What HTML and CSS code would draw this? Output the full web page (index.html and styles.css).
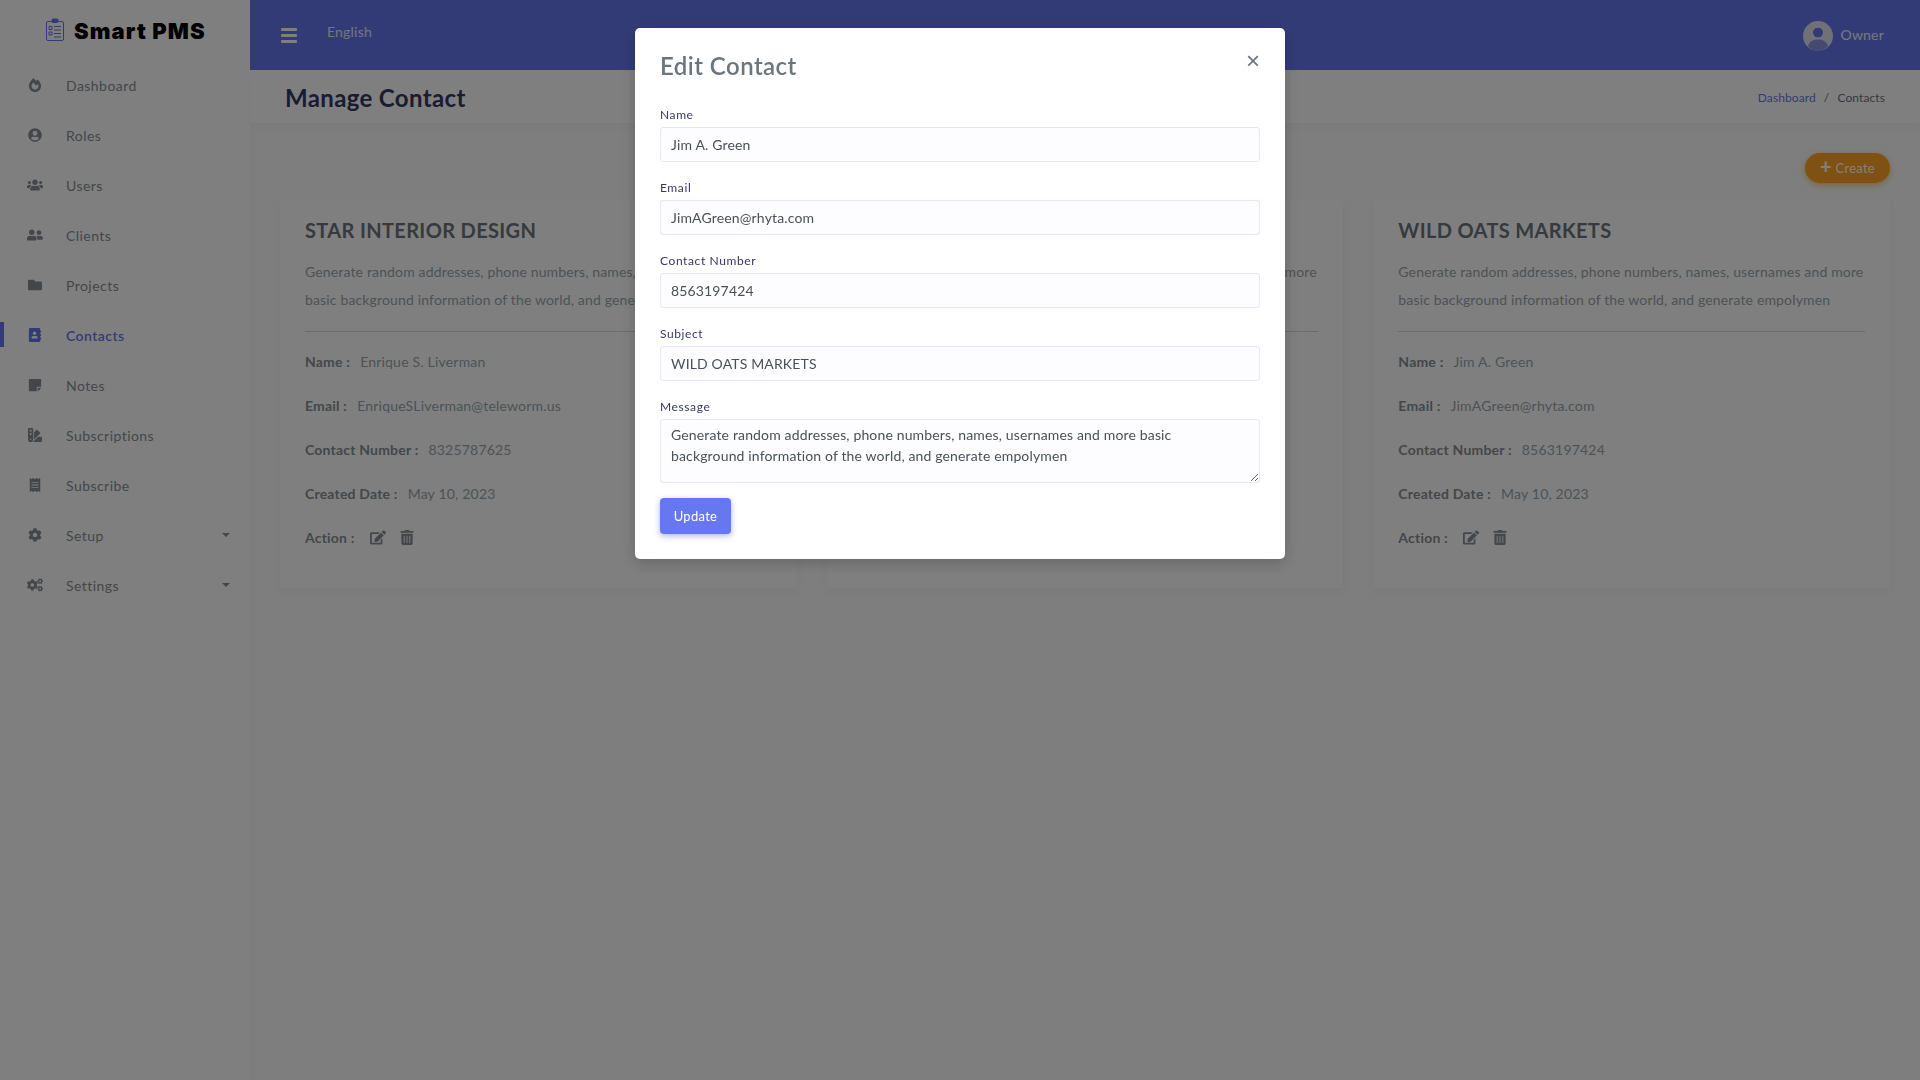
FILE: index.html
```html
<!DOCTYPE html>
<html lang="en">
  <head>
    <meta charset="UTF-8" />
    <meta name="viewport" content="width=device-width, initial-scale=1.0" />
    <title>Smart PMS - Contacts</title>
    <link rel="stylesheet" href="styles.css">
  </head>
  <body>
    <!-- icon set -->
    <svg class="icon-defs" aria-hidden="true">
      <symbol id="i-fire" viewBox="0 0 448 512"><path d="M323.56 51.2c-20.8 19.3-39.58 39.59-56.22 59.97C240.08 73.62 206.28 35.53 168 0 69.74 91.17 0 209.96 0 281.6 0 408.85 100.29 512 224 512s224-103.15 224-230.4c0-53.27-51.98-163.14-124.44-230.4zm-19.47 340.65C282.43 407.01 255.72 416 226.86 416 154.71 416 96 368.26 96 290.75c0-38.61 24.31-72.63 72.79-130.75 6.93 7.98 98.83 125.34 98.83 125.34l58.63-66.88c4.14 6.85 7.91 13.55 11.27 19.97 27.35 52.19 15.81 118.97-33.43 153.42z"/></symbol>
      <symbol id="i-user-circle" viewBox="0 0 496 512"><path d="M248 8C111 8 0 119 0 256s111 248 248 248 248-111 248-248S385 8 248 8zm0 96c48.6 0 88 39.4 88 88s-39.4 88-88 88-88-39.4-88-88 39.4-88 88-88zm0 344c-58.7 0-111.3-26.6-146.5-68.2 18.8-35.4 55.6-59.8 98.5-59.8 2.4 0 4.8.4 7.1 1.1 13 4.2 26.6 6.9 40.9 6.9 14.3 0 28-2.7 40.9-6.9 2.3-.7 4.7-1.1 7.1-1.1 42.9 0 79.7 24.4 98.5 59.8C359.3 421.4 306.7 448 248 448z"/></symbol>
      <symbol id="i-users" viewBox="0 0 640 512"><path d="M96 224c35.3 0 64-28.7 64-64s-28.7-64-64-64-64 28.7-64 64 28.7 64 64 64zm448 0c35.3 0 64-28.7 64-64s-28.7-64-64-64-64 28.7-64 64 28.7 64 64 64zm32 32h-64c-17.6 0-33.5 7.1-45.1 18.6 40.3 22.1 68.9 62 75.1 109.4h66c17.7 0 32-14.3 32-32v-32c0-35.3-28.7-64-64-64zm-256 0c61.9 0 112-50.1 112-112S381.9 32 320 32 208 82.1 208 144s50.1 112 112 112zm76.8 32h-8.3c-20.8 10-43.9 16-68.5 16s-47.6-6-68.5-16h-8.3C179.6 288 128 339.6 128 403.2V432c0 26.5 21.5 48 48 48h288c26.5 0 48-21.5 48-48v-28.8c0-63.6-51.6-115.2-115.2-115.2zm-223.7-13.4C161.5 263.1 145.6 256 128 256H64c-35.3 0-64 28.7-64 64v32c0 17.7 14.3 32 32 32h65.9c6.3-47.4 34.9-87.3 75.2-109.4z"/></symbol>
      <symbol id="i-friends" viewBox="0 0 640 512"><path d="M192 256c61.9 0 112-50.1 112-112S253.9 32 192 32 80 82.1 80 144s50.1 112 112 112zm76.8 32h-8.3c-20.8 10-43.9 16-68.5 16s-47.6-6-68.5-16h-8.3C51.6 288 0 339.6 0 403.2V432c0 26.5 21.5 48 48 48h288c26.5 0 48-21.5 48-48v-28.8c0-63.6-51.6-115.2-115.2-115.2zM480 256c53 0 96-43 96-96s-43-96-96-96-96 43-96 96 43 96 96 96zm48 32h-3.8c-13.9 4.8-28.6 8-44.2 8s-30.3-3.2-44.2-8H432c-20.4 0-39.2 5.9-55.7 15.4 24.4 26.3 39.7 61.2 39.7 99.8v38.4c0 2.2-.5 4.3-.6 6.4H592c26.5 0 48-21.5 48-48 0-61.9-50.1-112-112-112z"/></symbol>
      <symbol id="i-folder" viewBox="0 0 512 512"><path d="M464 128H272l-64-64H48C21.49 64 0 85.49 0 112v288c0 26.51 21.49 48 48 48h416c26.51 0 48-21.49 48-48V176c0-26.51-21.49-48-48-48z"/></symbol>
      <symbol id="i-address" viewBox="0 0 448 512"><path d="M436 160c6.6 0 12-5.4 12-12v-40c0-6.6-5.4-12-12-12h-20V48c0-26.5-21.5-48-48-48H48C21.5 0 0 21.5 0 48v416c0 26.5 21.5 48 48 48h320c26.5 0 48-21.5 48-48v-48h20c6.6 0 12-5.4 12-12v-40c0-6.6-5.4-12-12-12h-20v-64h20c6.6 0 12-5.4 12-12v-40c0-6.6-5.4-12-12-12h-20v-64h20zm-228-32c35.3 0 64 28.7 64 64s-28.7 64-64 64-64-28.7-64-64 28.7-64 64-64zm112 236.8c0 10.6-10 19.2-22.4 19.2H118.4C106 384 96 375.4 96 364.8v-19.2c0-31.8 30.1-57.6 67.2-57.6h5c12.3 5.1 25.7 8 39.8 8s27.6-2.9 39.8-8h5c37.1 0 67.2 25.8 67.2 57.6v19.2z"/></symbol>
      <symbol id="i-note" viewBox="0 0 448 512"><path d="M312 320h136V56c0-13.3-10.7-24-24-24H24C10.7 32 0 42.7 0 56v400c0 13.3 10.7 24 24 24h264V344c0-13.2 10.8-24 24-24zm129 55l-98 98c-4.5 4.5-10.8 7-17 7h-6v-128h128v6.1c0 6.3-2.5 12.4-7 16.9z"/></symbol>
      <symbol id="i-swatch" viewBox="0 0 512 512"><path d="M434.66,167.71h0L344.5,77.36a31.83,31.83,0,0,0-45-.07h0l-.07.07L224,152.88V424L434.66,212.9A32,32,0,0,0,434.66,167.71ZM480,320H373.19L186.29,507.42c-1.2,1.2-2.5,2.2-3.8,3.38H480a32,32,0,0,0,32-32V352A32,32,0,0,0,480,320ZM192,32A32,32,0,0,0,160,0H32A32,32,0,0,0,0,32V416a96,96,0,0,0,192,0ZM96,440a24,24,0,1,1,24-24A24,24,0,0,1,96,440Zm32-184H64V192h64Zm0-128H64V64h64Z"/></symbol>
      <symbol id="i-receipt" viewBox="0 0 384 512"><path d="M358.4 3.2L320 48 265.6 3.2a15.9 15.9 0 0 0-19.2 0L192 48 137.6 3.2a15.9 15.9 0 0 0-19.2 0L64 48 25.6 3.2C15-4.7 0 2.8 0 16v480c0 13.2 15 20.7 25.6 12.8L64 464l54.4 44.8a15.9 15.9 0 0 0 19.2 0L192 464l54.4 44.8a15.9 15.9 0 0 0 19.2 0L320 464l38.4 44.8c10.5 7.9 25.6.4 25.6-12.8V16c0-13.2-15-20.7-25.6-12.8zM320 360c0 4.4-3.6 8-8 8H72c-4.4 0-8-3.6-8-8v-16c0-4.4 3.6-8 8-8h240c4.4 0 8 3.6 8 8v16zm0-96c0 4.4-3.6 8-8 8H72c-4.4 0-8-3.6-8-8v-16c0-4.4 3.6-8 8-8h240c4.4 0 8 3.6 8 8v16zm0-96c0 4.4-3.6 8-8 8H72c-4.4 0-8-3.6-8-8v-16c0-4.4 3.6-8 8-8h240c4.4 0 8 3.6 8 8v16z"/></symbol>
      <symbol id="i-cog" viewBox="0 0 512 512"><path d="M487.4 315.7l-42.6-24.6c4.3-23.2 4.3-47 0-70.2l42.6-24.6c4.9-2.8 7.1-8.6 5.5-14-11.1-35.6-30-67.8-54.7-94.6-3.8-4.1-10-5.1-14.8-2.3L380.8 110c-17.9-15.4-38.5-27.3-60.8-35.1V25.8c0-5.6-3.9-10.5-9.4-11.7-36.7-8.2-74.3-7.8-109.2 0-5.5 1.2-9.4 6.1-9.4 11.7V75c-22.2 7.9-42.8 19.8-60.8 35.1L88.7 85.5c-4.9-2.8-11-1.9-14.8 2.3-24.7 26.7-43.6 58.9-54.7 94.6-1.7 5.4.6 11.2 5.5 14L67.3 221c-4.3 23.2-4.3 47 0 70.2l-42.6 24.6c-4.9 2.8-7.1 8.6-5.5 14 11.1 35.6 30 67.8 54.7 94.6 3.8 4.1 10 5.1 14.8 2.3l42.6-24.6c17.9 15.4 38.5 27.3 60.8 35.1v49.2c0 5.6 3.9 10.5 9.4 11.7 36.7 8.2 74.3 7.8 109.2 0 5.5-1.2 9.4-6.1 9.4-11.7v-49.2c22.2-7.9 42.8-19.8 60.8-35.1l42.6 24.6c4.9 2.8 11 1.9 14.8-2.3 24.7-26.7 43.6-58.9 54.7-94.6 1.5-5.5-.7-11.3-5.6-14.1zM256 336c-44.1 0-80-35.9-80-80s35.9-80 80-80 80 35.9 80 80-35.9 80-80 80z"/></symbol>
      <symbol id="i-cogs" viewBox="0 0 640 512"><path d="M512.1 191l-8.2 14.3c-3 5.3-9.4 7.5-15.1 5.4-11.8-4.4-22.6-10.7-32.1-18.6-4.6-3.8-5.8-10.5-2.8-15.7l8.2-14.3c-6.9-8-12.3-17.3-15.9-27.4h-16.5c-6 0-11.2-4.3-12.2-10.3-2-12-2.1-24.6 0-37.1 1-6 6.2-10.4 12.2-10.4h16.5c3.6-10.1 9-19.4 15.9-27.4l-8.2-14.3c-3-5.2-1.9-11.9 2.8-15.7 9.5-7.9 20.4-14.2 32.1-18.6 5.7-2.1 12.1.1 15.1 5.4l8.2 14.3c10.5-1.9 21.2-1.9 31.7 0L552 6.3c3-5.3 9.4-7.5 15.1-5.4 11.8 4.4 22.6 10.7 32.1 18.6 4.6 3.8 5.8 10.5 2.8 15.7l-8.2 14.3c6.9 8 12.3 17.3 15.9 27.4h16.5c6 0 11.2 4.3 12.2 10.3 2 12 2.1 24.6 0 37.1-1 6-6.2 10.4-12.2 10.4h-16.5c-3.6 10.1-9 19.4-15.9 27.4l8.2 14.3c3 5.2 1.9 11.9-2.8 15.7-9.5 7.9-20.4 14.2-32.1 18.6-5.7 2.1-12.1-.1-15.1-5.4l-8.2-14.3c-10.4 1.9-21.2 1.9-31.7 0zm-10.5-58.8c38.5 29.6 82.4-14.3 52.8-52.8-38.5-29.7-82.4 14.3-52.8 52.8zM386.3 286.1l33.7 16.8c10.1 5.8 14.5 18.1 10.5 29.1-8.9 24.2-26.4 46.4-42.6 65.8-7.4 8.9-20.2 11.1-30.3 5.3l-29.1-16.8c-16 13.7-34.6 24.6-54.9 31.7v33.6c0 11.6-8.3 21.6-19.7 23.6-24.6 4.2-50.4 4.4-75.9 0-11.5-2-20-11.9-20-23.6V418c-20.3-7.2-38.9-18-54.9-31.7L74 403c-10 5.8-22.9 3.6-30.3-5.3-16.2-19.4-33.3-41.6-42.2-65.7-4-10.9.4-23.2 10.5-29.1l33.3-16.8c-3.9-20.9-3.9-42.4 0-63.4L12 205.8c-10.1-5.8-14.6-18.1-10.5-29 8.9-24.2 26-46.4 42.2-65.8 7.4-8.9 20.2-11.1 30.3-5.3l29.1 16.8c16-13.7 34.6-24.6 54.9-31.7V57.1c0-11.5 8.2-21.5 19.6-23.5 24.6-4.2 50.5-4.4 76-.1 11.5 2 20 11.9 20 23.6v33.6c20.3 7.2 38.9 18 54.9 31.7l29.1-16.8c10-5.8 22.9-3.6 30.3 5.3 16.2 19.4 33.2 41.6 42.1 65.8 4 10.9.1 23.2-10 29.1l-33.7 16.8c3.9 21 3.9 42.5 0 63.5zm-117.6 21.1c59.2-77-28.7-164.9-105.7-105.7-59.2 77 28.7 164.9 105.7 105.7zm243.4 182.7l-8.2 14.3c-3 5.3-9.4 7.5-15.1 5.4-11.8-4.4-22.6-10.7-32.1-18.6-4.6-3.8-5.8-10.5-2.8-15.7l8.2-14.3c-6.9-8-12.3-17.3-15.9-27.4h-16.5c-6 0-11.2-4.3-12.2-10.3-2-12-2.1-24.6 0-37.1 1-6 6.2-10.4 12.2-10.4h16.5c3.6-10.1 9-19.4 15.9-27.4l-8.2-14.3c-3-5.2-1.9-11.9 2.8-15.7 9.5-7.9 20.4-14.2 32.1-18.6 5.7-2.1 12.1.1 15.1 5.4l8.2 14.3c10.5-1.9 21.2-1.9 31.7 0l8.2-14.3c3-5.3 9.4-7.5 15.1-5.4 11.8 4.4 22.6 10.7 32.1 18.6 4.6 3.8 5.8 10.5 2.8 15.7l-8.2 14.3c6.9 8 12.3 17.3 15.9 27.4h16.5c6 0 11.2 4.3 12.2 10.3 2 12 2.1 24.6 0 37.1-1 6-6.2 10.4-12.2 10.4h-16.5c-3.6 10.1-9 19.4-15.9 27.4l8.2 14.3c3 5.2 1.9 11.9-2.8 15.7-9.5 7.9-20.4 14.2-32.1 18.6-5.7 2.1-12.1-.1-15.1-5.4l-8.2-14.3c-10.4 1.9-21.2 1.9-31.7 0zM501.6 431c38.5 29.6 82.4-14.3 52.8-52.8-38.5-29.6-82.4 14.3-52.8 52.8z"/></symbol>
      <symbol id="i-edit" viewBox="0 0 576 512"><path d="M402.6 83.2l90.2 90.2c3.8 3.8 3.8 10 0 13.8L274.4 405.6l-92.8 10.3c-12.4 1.4-22.9-9.1-21.5-21.5l10.3-92.8L388.8 83.2c3.8-3.8 10-3.8 13.8 0zm162-22.9l-48.8-48.8c-15.2-15.2-39.9-15.2-55.2 0l-35.4 35.4c-3.8 3.8-3.8 10 0 13.8l90.2 90.2c3.8 3.8 10 3.8 13.8 0l35.4-35.4c15.2-15.3 15.2-40 0-55.2zM384 346.2V448H64V128h229.8c3.2 0 6.2-1.3 8.5-3.5l40-40c7.6-7.6 2.2-20.5-8.5-20.5H48C21.5 64 0 85.5 0 112v352c0 26.5 21.5 48 48 48h352c26.5 0 48-21.5 48-48V306.2c0-10.7-12.9-16-20.5-8.5l-40 40c-2.2 2.3-3.5 5.3-3.5 8.5z"/></symbol>
      <symbol id="i-trash" viewBox="0 0 448 512"><path d="M32 464a48 48 0 0 0 48 48h288a48 48 0 0 0 48-48V128H32zm272-256a16 16 0 0 1 32 0v224a16 16 0 0 1-32 0zm-96 0a16 16 0 0 1 32 0v224a16 16 0 0 1-32 0zm-96 0a16 16 0 0 1 32 0v224a16 16 0 0 1-32 0zM432 32H312l-9.4-18.7A24 24 0 0 0 281.1 0H166.8a23.72 23.72 0 0 0-21.4 13.3L136 32H16A16 16 0 0 0 0 48v32a16 16 0 0 0 16 16h416a16 16 0 0 0 16-16V48a16 16 0 0 0-16-16z"/></symbol>
    </svg>

    <!-- sidebar -->
    <aside class="sidebar">
      <div class="brand">
        <svg class="brand-icon" viewBox="0 0 18 23" fill="none" stroke="#6777ef" stroke-width="1">
          <rect x="0.5" y="3.5" width="17" height="19" rx="1.5" />
          <rect x="6" y="1" width="6" height="3.5" rx="1" fill="#6777ef" />
          <path d="M8 8.5h7M8 12h7M8 15.5h7M8 19h7M3 8.5h3v3H3zM3 14h3v3H3z" />
        </svg>
        <span class="brand-name">Smart PMS</span>
      </div>
      <nav class="side-nav">
        <a class="nav-item"><span class="nav-icon"><svg><use href="#i-fire" /></svg></span>Dashboard</a>
        <a class="nav-item"><span class="nav-icon"><svg><use href="#i-user-circle" /></svg></span>Roles</a>
        <a class="nav-item"><span class="nav-icon"><svg><use href="#i-users" /></svg></span>Users</a>
        <a class="nav-item"><span class="nav-icon"><svg><use href="#i-friends" /></svg></span>Clients</a>
        <a class="nav-item"><span class="nav-icon"><svg><use href="#i-folder" /></svg></span>Projects</a>
        <a class="nav-item active"><span class="nav-icon"><svg><use href="#i-address" /></svg></span>Contacts</a>
        <a class="nav-item"><span class="nav-icon"><svg><use href="#i-note" /></svg></span>Notes</a>
        <a class="nav-item"><span class="nav-icon"><svg><use href="#i-swatch" /></svg></span>Subscriptions</a>
        <a class="nav-item"><span class="nav-icon"><svg><use href="#i-receipt" /></svg></span>Subscribe</a>
        <a class="nav-item has-caret"><span class="nav-icon"><svg><use href="#i-cog" /></svg></span>Setup</a>
        <a class="nav-item has-caret"><span class="nav-icon"><svg><use href="#i-cogs" /></svg></span>Settings</a>
      </nav>
    </aside>

    <div class="page">
      <!-- top bar -->
      <header class="topbar">
        <div class="topbar-left">
          <span class="burger"><i></i><i></i><i></i></span>
          <span class="lang">English</span>
        </div>
        <div class="user">
          <svg class="avatar" viewBox="0 0 30 30">
            <circle cx="15" cy="15" r="15" fill="#dfe3ee" />
            <circle cx="15" cy="11.5" r="5.5" fill="#6777ef" stroke="#f4f5fa" stroke-width="1" />
            <path d="M5 25c1.5-5 5.500-6.500 10-6.500S23.500 20 25 25c-2.500 3-6 5-10 5s-7.500-2-10-5z" fill="#8a97e0" />
          </svg>
          <span>Owner</span>
        </div>
      </header>

      <!-- page title -->
      <section class="page-head">
        <h1>Manage Contact</h1>
        <div class="crumbs">
          <a>Dashboard</a>
          <span class="sep">/</span>
          <span>Contacts</span>
        </div>
      </section>

      <main class="content">
        <div class="actions">
          <button class="btn-create"><b>+</b> Create</button>
        </div>

        <div class="cards">
          <article class="card">
            <h4>STAR INTERIOR DESIGN</h4>
            <p class="desc">Generate random addresses, phone numbers, names, usernames and more basic background information of the world, and generate empolymen</p>
            <hr />
            <p class="row"><b>Name :</b> <span>Enrique S. Liverman</span></p>
            <p class="row"><b>Email :</b> <span>EnriqueSLiverman@teleworm.us</span></p>
            <p class="row"><b>Contact Number :</b> <span>8325787625</span></p>
            <p class="row"><b>Created Date :</b> <span>May 10, 2023</span></p>
            <p class="row"><b>Action :</b>
              <svg class="act act-edit"><use href="#i-edit" /></svg>
              <svg class="act"><use href="#i-trash" /></svg>
            </p>
          </article>

          <article class="card">
            <h4>WILD OATS MARKETS</h4>
            <p class="desc">Generate random addresses, phone numbers, names, usernames and more basic background information of the world, and generate empolymen</p>
            <hr />
            <p class="row"><b>Name :</b> <span>Jim A. Green</span></p>
            <p class="row"><b>Email :</b> <span>JimAGreen@rhyta.com</span></p>
            <p class="row"><b>Contact Number :</b> <span>8563197424</span></p>
            <p class="row"><b>Created Date :</b> <span>May 10, 2023</span></p>
            <p class="row"><b>Action :</b>
              <svg class="act act-edit"><use href="#i-edit" /></svg>
              <svg class="act"><use href="#i-trash" /></svg>
            </p>
          </article>

          <article class="card">
            <h4>WILD OATS MARKETS</h4>
            <p class="desc">Generate random addresses, phone numbers, names, usernames and more basic background information of the world, and generate empolymen</p>
            <hr />
            <p class="row"><b>Name :</b> <span>Jim A. Green</span></p>
            <p class="row"><b>Email :</b> <span>JimAGreen@rhyta.com</span></p>
            <p class="row"><b>Contact Number :</b> <span>8563197424</span></p>
            <p class="row"><b>Created Date :</b> <span>May 10, 2023</span></p>
            <p class="row"><b>Action :</b>
              <svg class="act act-edit"><use href="#i-edit" /></svg>
              <svg class="act"><use href="#i-trash" /></svg>
            </p>
          </article>
        </div>
      </main>
    </div>

    <!-- edit modal -->
    <div class="backdrop"></div>
    <div class="modal">
      <div class="modal-head">
        <h5>Edit Contact</h5>
        <button class="close" aria-label="Close">&times;</button>
      </div>
      <form>
        <div class="field">
          <label for="name">Name</label>
          <input type="text" id="name" value="Jim A. Green" />
        </div>
        <div class="field">
          <label for="email">Email</label>
          <input type="text" id="email" value="JimAGreen@rhyta.com" />
        </div>
        <div class="field">
          <label for="phone">Contact Number</label>
          <input type="text" id="phone" value="8563197424" />
        </div>
        <div class="field">
          <label for="subject">Subject</label>
          <input type="text" id="subject" value="WILD OATS MARKETS" />
        </div>
        <div class="field field-msg">
          <label for="message">Message</label>
          <textarea id="message">Generate random addresses, phone numbers, names, usernames and more basic background information of the world, and generate empolymen</textarea>
        </div>
        <button type="button" class="btn-update">Update</button>
      </form>
    </div>
  </body>
</html>
```
FILE: styles.css
```css
* {
  box-sizing: border-box;
}

body {
  margin: 0;
  display: flex;
  min-height: 1080px;
  background-color: #fafdfb;
  color: #6c757d;
  font-family: "Lato", "Noto Sans", sans-serif;
  font-size: 14px;
  letter-spacing: 0.15px;
}

.icon-defs {
  display: none;
}

svg {
  fill: currentColor;
}

/* sidebar */
.sidebar {
  flex: 0 0 250px;
  background-color: #fff;
  box-shadow: 0 4px 8px rgba(0, 0, 0, 0.03);
}

.brand {
  display: flex;
  align-items: center;
  height: 60px;
  padding-left: 46px;
  gap: 10px;
}

.brand-icon {
  width: 18px;
  height: 23px;
  margin-top: -1px;
  fill: none;
}

.brand-name {
  color: #000;
  font-family: "Inter", sans-serif;
  font-size: 22px;
  font-weight: 900;
  letter-spacing: 1.1px;
  margin-top: 2px;
}

.nav-item {
  position: relative;
  display: flex;
  align-items: center;
  height: 50px;
  padding-left: 26px;
  color: #868e96;
  letter-spacing: 0.45px;
}

.nav-icon {
  display: flex;
  justify-content: center;
  width: 18px;
  margin-right: 22px;
  margin-top: -1px;
  color: #868e96;
}

.nav-icon svg {
  width: 16px;
  height: 14px;
}

.nav-item.active,
.nav-item.active .nav-icon {
  color: #6777ef;
  font-weight: 600;
}

.nav-item.active::before {
  content: '';
  position: absolute;
  left: 0;
  top: 12px;
  width: 4px;
  height: 25px;
  background-color: #6777ef;
}

.has-caret::after {
  content: '';
  position: absolute;
  left: 222px;
  top: 23px;
  border-style: solid;
  border-width: 4px 4px 0;
  border-color: #868e96 transparent transparent;
}

/* main area */
.page {
  flex: 1;
  min-width: 0;
}

.topbar {
  display: flex;
  justify-content: space-between;
  align-items: center;
  height: 70px;
  padding: 0 36px 0 31px;
  background-color: #6777ef;
  color: #fff;
}

.topbar-left {
  display: flex;
  align-items: center;
  gap: 30px;
}

.burger {
  display: flex;
  flex-direction: column;
  gap: 3px;
  width: 16px;
  margin-top: 1px;
}

.burger i {
  height: 3px;
  background-color: #fff;
  border-radius: 1px;
}

.lang {
  margin-top: -7px;
  color: #e6e8fb;
  letter-spacing: 0.2px;
}

.user {
  display: flex;
  align-items: center;
  gap: 7px;
  color: #eef0fd;
  letter-spacing: 0.2px;
}

.user span {
  margin-top: -1px;
}

.avatar {
  width: 30px;
  height: 30px;
  margin-top: 1px;
}

.page-head {
  display: flex;
  justify-content: space-between;
  align-items: center;
  height: 53px;
  padding: 1px 35px 0;
  background-color: #fff;
  box-shadow: 0 4px 8px rgba(0, 0, 0, 0.03);
}

.page-head h1 {
  margin: 0;
  color: #34395e;
  font-size: 24px;
  font-weight: 700;
  letter-spacing: 0.35px;
}

.crumbs {
  display: flex;
  gap: 8px;
  font-size: 12px;
  letter-spacing: 0.1px;
  color: #6c757d;
}

.crumbs a {
  color: #6777ef;
}

.content {
  padding: 30px 30px 0;
}

.actions {
  display: flex;
  justify-content: flex-end;
}

.btn-create {
  height: 30px;
  width: 85px;
  padding: 0;
  border: none;
  border-radius: 30px;
  background-color: #ffa426;
  color: #fff;
  font-family: inherit;
  font-size: 13px;
  letter-spacing: 0.25px;
  box-shadow: 0 2px 6px #ffc473;
}

.btn-create b {
  font-size: 20px;
  font-weight: 700;
  line-height: 12px;
  vertical-align: -1px;
}

.cards {
  display: grid;
  grid-template-columns: repeat(3, 1fr);
  gap: 30px;
  margin-top: 17px;
}

.card {
  height: 388px;
  padding: 18px 25px 0;
  background-color: #fff;
  border-radius: 3px;
  box-shadow: 0 4px 8px rgba(0, 0, 0, 0.03);
}

.card h4 {
  margin: 0;
  color: #6c757d;
  font-size: 20px;
  line-height: 24px;
  font-weight: 700;
  letter-spacing: 0.35px;
}

.desc {
  margin: 16px 0 0;
  color: #98a6ad;
  line-height: 28px;
}

.card hr {
  margin: 17px 0 0;
  border: none;
  border-top: 1px solid rgba(0, 0, 0, 0.15);
}

.row {
  display: flex;
  align-items: center;
  gap: 10px;
  height: 22px;
  margin: 22px 0;
  color: #98a6ad;
  letter-spacing: 0.2px;
}

.card hr + .row {
  margin-top: 18px;
}

.row b {
  color: #868e96;
  font-weight: 700;
}

.act {
  width: 16px;
  height: 15px;
  color: #868e96;
}

.act-edit {
  margin-left: 5px;
  margin-right: 3px;
}

/* modal */
.backdrop {
  position: fixed;
  inset: 0;
  background-color: rgba(0, 0, 0, 0.5);
}

.modal {
  position: fixed;
  left: 635px;
  top: 28px;
  width: 650px;
  padding: 25px;
  background-color: #fff;
  border-radius: 5px;
  box-shadow: 0 4px 15px rgba(0, 0, 0, 0.2);
}

.modal-head {
  display: flex;
  justify-content: space-between;
  margin-bottom: 27px;
}

.modal-head h5 {
  margin: 0;
  color: #6c757d;
  font-size: 24px;
  line-height: 26px;
  font-weight: 600;
  letter-spacing: 0.45px;
}

.close {
  padding: 0;
  height: 20px;
  width: 14px;
  margin-top: -2px;
  border: none;
  background: none;
  color: #6c757d;
  font-size: 24px;
  line-height: 20px;
}

.field {
  margin-bottom: 17px;
}

.field label {
  display: block;
  height: 18px;
  margin-bottom: 3px;
  color: #34395e;
  font-size: 12px;
  line-height: 18px;
  font-weight: 400;
  letter-spacing: 0.6px;
}

.field input,
.field textarea {
  display: block;
  width: 100%;
  height: 35px;
  padding: 0 10px 1px;
  border: 1px solid #e4e6fc;
  border-radius: 3px;
  outline: none;
  background-color: #fdfdff;
  color: #495057;
  font-family: inherit;
  font-size: 14px;
  letter-spacing: 0.15px;
}

.field textarea {
  height: 64px;
  padding: 4px 40px 4px 10px;
  line-height: 21px;
}

.field-msg {
  margin-bottom: 15px;
}

.btn-update {
  display: block;
  width: 71px;
  height: 36px;
  padding: 0;
  border: none;
  border-radius: 4px;
  background-color: #6777ef;
  color: #fff;
  font-family: inherit;
  font-size: 13px;
  letter-spacing: 0.3px;
  box-shadow: 0 2px 6px #acb5f6;
}
```
